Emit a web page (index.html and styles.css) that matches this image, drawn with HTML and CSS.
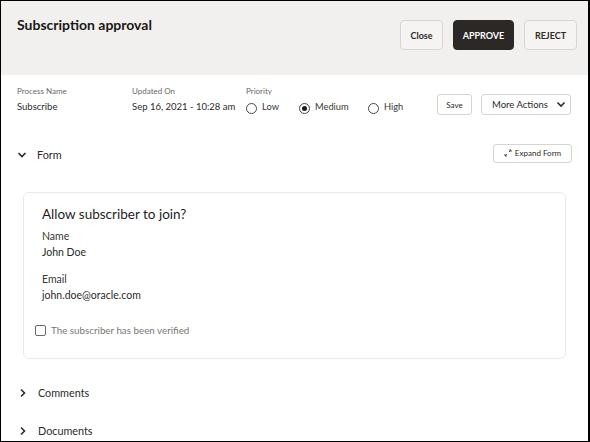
FILE: index.html
```html
<!DOCTYPE html>
<html>
<head>
<meta charset="utf-8">
<link rel="stylesheet" href="styles.css">
</head>
<body>
<div class="frame">
  <header class="header">
    <h1 class="title">Subscription approval</h1>
    <div class="actions">
      <button class="btn btn-light">Close</button>
      <button class="btn btn-dark">APPROVE</button>
      <button class="btn btn-light">REJECT</button>
    </div>
  </header>

  <section class="meta">
    <div class="field f-process">
      <div class="label">Process Name</div>
      <div class="value">Subscribe</div>
    </div>
    <div class="field f-updated">
      <div class="label">Updated On</div>
      <div class="value">Sep 16, 2021 - 10:28 am</div>
    </div>
    <div class="field f-priority">
      <div class="label">Priority</div>
      <div class="radios">
        <span class="radio r-low"><span class="circle"></span>Low</span>
        <span class="radio r-med"><span class="circle checked"></span>Medium</span>
        <span class="radio r-high"><span class="circle"></span>High</span>
      </div>
    </div>
    <div class="meta-actions">
      <button class="sbtn save">Save</button>
      <button class="sbtn more"><span>More Actions</span>
        <svg class="chev-down" width="10" height="7" viewBox="0 0 10 7"><path d="M1.5 1.5 L5 5 L8.5 1.5" fill="none" stroke="#2b2b2b" stroke-width="1.6"/></svg>
      </button>
    </div>
  </section>

  <section class="section-row form-row">
    <div class="toggle">
      <svg class="chev" width="10" height="8" viewBox="0 0 10 8"><path d="M1.5 2 L5 5.5 L8.5 2" fill="none" stroke="#2b2b2b" stroke-width="1.6"/></svg>
      <span class="sec-title">Form</span>
    </div>
    <button class="sbtn expand">
      <svg width="8" height="8" viewBox="0 0 8 8"><path d="M1 7 L3 5 M1 7 V5 M1 7 H3 M7 1 L5 3 M7 1 V3 M7 1 H5" fill="none" stroke="#444" stroke-width="0.9"/></svg>
      Expand Form
    </button>
  </section>

  <div class="card">
    <div class="card-title">Allow subscriber to join?</div>
    <div class="cfield">
      <div class="clabel">Name</div>
      <div class="cvalue">John Doe</div>
    </div>
    <div class="cfield">
      <div class="clabel">Email</div>
      <div class="cvalue">john.doe@oracle.com</div>
    </div>
    <label class="check"><span class="box"></span>The subscriber has been verified</label>
  </div>

  <section class="section-row collapsed c-comments">
    <div class="toggle">
      <svg class="chev" width="10" height="10" viewBox="0 0 10 10"><path d="M3 1.5 L6.5 5 L3 8.5" fill="none" stroke="#2b2b2b" stroke-width="1.6"/></svg>
      <span class="sec-title">Comments</span>
    </div>
  </section>
  <section class="section-row collapsed c-docs">
    <div class="toggle">
      <svg class="chev" width="10" height="10" viewBox="0 0 10 10"><path d="M3 1.5 L6.5 5 L3 8.5" fill="none" stroke="#2b2b2b" stroke-width="1.6"/></svg>
      <span class="sec-title">Documents</span>
    </div>
  </section>
</div>
</body>
</html>
```

FILE: styles.css
```css
* { box-sizing: border-box; }
html, body { margin: 0; padding: 0; background: #fff; }
body { font-family: Lato, "Noto Sans", "Liberation Sans", sans-serif; color: #2b2b2b; }

.frame {
  width: 590px;
  height: 442px;
  border-top: 1px solid #000;
  border-left: 1px solid #000;
  border-bottom: 1px solid #000;
  border-right: 2px solid #000;
  overflow: hidden;
  background: #fff;
}

.header {
  height: 74px;
  background: #f1f0ee;
  display: flex;
  justify-content: space-between;
  align-items: flex-start;
  padding: 0 11px 0 16px;
}
.title {
  margin: 15px 0 0;
  font-size: 14px;
  line-height: 18px;
  font-weight: 700;
  color: #1a1816;
}
.actions { display: flex; gap: 10px; margin-top: 19px; }
.btn {
  height: 30px;
  border-radius: 4px;
  font-family: inherit;
  font-size: 9px;
  font-weight: 700;
  padding: 0;
  cursor: pointer;
}
.btn-light { background: #f5f4f2; border: 1px solid #d8d5d1; color: #2e2b28; }
.btn-dark { background: #2c2825; border: 1px solid #2c2825; color: #fff; }
.actions .btn:nth-child(1) { width: 43px; }
.actions .btn:nth-child(2) { width: 61px; }
.actions .btn:nth-child(3) { width: 53px; }

.meta {
  display: flex;
  align-items: flex-start;
  padding: 11px 0 0 16px;
  height: 68px;
}
.field { display: flex; flex-direction: column; }
.f-process { width: 115px; }
.f-updated { width: 114px; }
.f-priority { width: 191px; }
.label { font-size: 8px; line-height: 11px; color: #6b6865; }
.value { font-size: 9.5px; line-height: 14px; margin-top: 3px; color: #2b2b2b; }
.radios { display: flex; margin-top: 3px; font-size: 9.3px; line-height: 14px; color: #3a3835; }
.radio { display: inline-flex; align-items: center; }
.circle {
  width: 11px; height: 11px;
  border: 1px solid #4a4744;
  border-radius: 50%;
  margin-right: 5px;
  position: relative;
  margin-top: 2px;
}
.circle.checked::after {
  content: "";
  position: absolute;
  left: 2px; top: 2px;
  width: 5px; height: 5px;
  border-radius: 50%;
  background: #1f1d1b;
}
.r-low { width: 53px; }
.r-med { width: 69px; }

.meta-actions { display: flex; gap: 9px; margin-top: 8px; }
.sbtn {
  height: 21px;
  background: #fff;
  border: 1px solid #d8d5d1;
  border-radius: 3px;
  font-family: inherit;
  color: #2b2b2b;
  padding: 0;
  display: inline-flex;
  align-items: center;
  justify-content: center;
  white-space: nowrap;
  cursor: pointer;
}
.save { width: 35px; font-size: 8px; }
.more { width: 90px; font-size: 9.5px; justify-content: flex-start; padding-left: 10px; }
.chev-down { margin-left: 8px; }

.section-row {
  display: flex;
  justify-content: space-between;
  align-items: center;
  padding: 0 16px 0 16px;
}
.toggle { display: flex; align-items: center; }
.toggle .chev { margin-right: 10px; }
.sec-title { font-size: 10.8px; line-height: 14px; color: #2b2b2b; }
.form-row { height: 20px; }
.form-row .toggle { margin-top: 3px; }
.expand { width: 79px; font-size: 8px; height: 19px; gap: 3px; }

.card {
  margin: 29px 22px 0 22px;
  height: 167px;
  border: 1px solid #ebe9e7;
  border-radius: 6px;
  padding: 12px 18px 0 18px;
}
.card-title { font-size: 13.5px; line-height: 18px; color: #1f1d1b; }
.cfield { margin-top: 5px; }
.cfield + .cfield { margin-top: 11px; }
.clabel { font-size: 10.5px; line-height: 16px; color: #3a3835; }
.cvalue { font-size: 10.5px; line-height: 16px; color: #2b2b2b; }
.check {
  display: flex;
  align-items: center;
  margin: 21px 0 0 -7px;
  font-size: 9.8px;
  color: #7a7773;
}
.box {
  width: 11px; height: 11px;
  border: 1px solid #6b6865;
  border-radius: 2px;
  margin-right: 5px;
}

.collapsed { height: 38px; padding-left: 16px; }
.c-comments { margin-top: 15px; }
.collapsed .toggle .chev { margin-right: 10px; margin-left: 1px; }
```
